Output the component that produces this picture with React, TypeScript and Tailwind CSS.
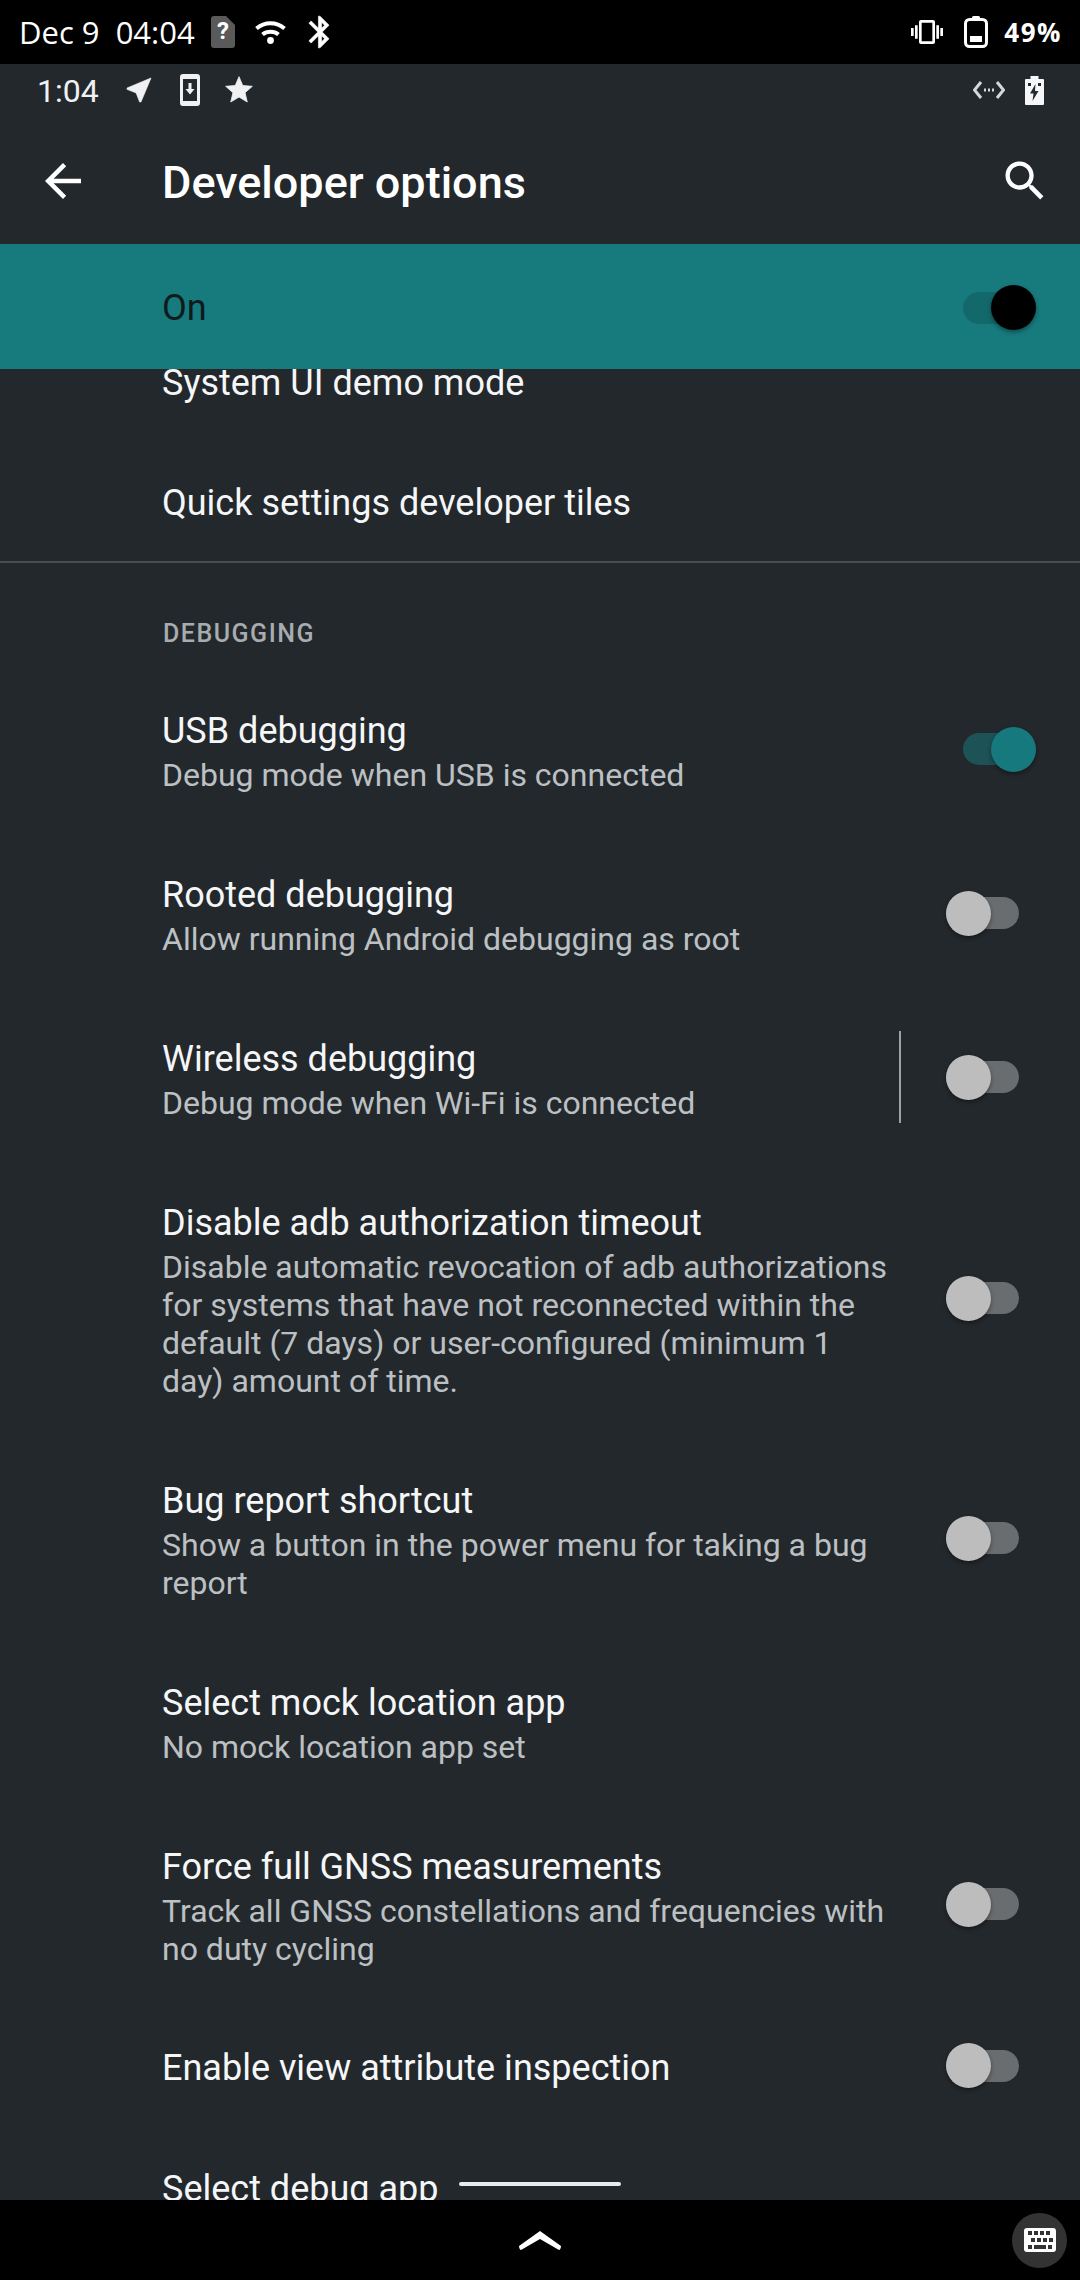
import React from 'react';

const Icon = ({ d, className }: { d: string; className: string }) => (
  <svg viewBox="0 0 24 24" fill="currentColor" className={className}>
    <path d={d} />
  </svg>
);

const Toggle = ({ on = false, nudge = false }: { on?: boolean; nudge?: boolean }) =>
  on ? (
    <div className={`ml-auto mr-[44px] flex h-[32px] w-[73px] shrink-0 items-center justify-end rounded-full bg-[#1d5257] ${nudge ? '-mt-[4px]' : ''}`}>
      <div className="h-[45px] w-[45px] shrink-0 rounded-full bg-[#15797e] shadow-[0_2px_4px_rgba(0,0,0,0.4)]" />
    </div>
  ) : (
    <div className={`ml-auto mr-[61px] flex h-[32px] w-[73px] shrink-0 items-center rounded-full bg-[#6a6d70] ${nudge ? '-mt-[4px]' : ''}`}>
      <div className="h-[45px] w-[45px] shrink-0 rounded-full bg-[#bdbdbd] shadow-[0_2px_4px_rgba(0,0,0,0.4)]" />
    </div>
  );

const Row = ({
  title,
  summary,
  toggle,
  on,
  divider,
  tall,
}: {
  title: string;
  summary?: string;
  toggle?: boolean;
  on?: boolean;
  divider?: boolean;
  tall?: boolean;
}) => (
  <div className={`flex items-center pl-[162px] ${summary ? 'pb-[36px] pt-[42px]' : tall ? 'h-[123px]' : 'h-[120px]'}`}>
    <div className={`${divider ? 'w-[737px]' : 'w-[730px]'} ${summary ? '' : 'pt-[4px]'}`}>
      <div className="text-[36px] leading-[46px] text-[#f5f6f7]">{title}</div>
      {summary && <div className="mt-[2px] text-[32px] leading-[38px] text-[#bcc0c3]">{summary}</div>}
    </div>
    {divider && <div className="-mb-[2px] -mt-[6px] h-[92px] w-[2px] bg-[#9ea2a5]" />}
    {toggle && <Toggle on={on} nudge={!!summary} />}
  </div>
);

export default function App() {
  return (
    <div className="flex h-[2280px] w-[1080px] flex-col overflow-hidden bg-[#23282c] font-['Roboto',sans-serif]">
      {/* device status bar */}
      <div className="flex h-[64px] shrink-0 items-center bg-black pl-[19px] pr-[18px] text-white">
        <span className="whitespace-pre font-['Open_Sans',sans-serif] text-[31px] font-medium">Dec 9  04:04</span>
        <svg viewBox="0 0 24 32" className="ml-[16px] h-[32px] w-[24px]">
          <path d="M3 0h12l9 9v20a3 3 0 0 1-3 3H3a3 3 0 0 1-3-3V3a3 3 0 0 1 3-3z" fill="#5a5a5a" />
          <text x="12" y="23" textAnchor="middle" fontSize="24" fontWeight="700" fill="#fff">?</text>
        </svg>
        <svg viewBox="0 0 31 23" fill="none" stroke="#fff" strokeWidth="4" className="ml-[20px] h-[23px] w-[31px]">
          <path d="M1.500 7.500C9.500 .5 21.500 .5 29.500 7.500" />
          <path d="M7.500 13.500c4.500-3.800 11.500-3.800 16 0" />
          <circle cx="15.500" cy="19.500" r="3.400" fill="#fff" stroke="none" />
        </svg>
        <Icon
          className="ml-[15px] h-[38px] w-[38px] stroke-white stroke-[0.4]"
          d="M17.710 7.710L12 2h-1v7.590L6.410 5 5 6.410 10.590 12 5 17.590 6.410 19 11 14.410V22h1l5.710-5.710-4.300-4.290 4.300-4.290zM13 5.830l1.880 1.880L13 9.590V5.830zm1.880 10.460L13 18.170v-3.760l1.880 1.880z"
        />
        <Icon
          className="ml-auto h-[32px] w-[32px]"
          d="M0 15h2V9H0v6zm3 2h2V7H3v10zm19-8v6h2V9h-2zm-3 8h2V7h-2v10zM16.500 3h-9C6.670 3 6 3.670 6 4.500v15c0 .830.670 1.500 1.500 1.500h9c.830 0 1.500-.670 1.500-1.500v-15c0-.830-.670-1.500-1.500-1.500zM16 19H8V5h8v14z"
        />
        <svg viewBox="0 0 24 32" className="ml-[21px] h-[32px] w-[24px]" fill="none">
          <rect x="8" y="0" width="8" height="4" rx="1.500" fill="#fff" />
          <rect x="1.500" y="3.500" width="21" height="27" rx="4" stroke="#fff" strokeWidth="3" />
          <rect x="6" y="20" width="12" height="6" fill="#fff" />
        </svg>
        <span className="ml-[16px] font-['Open_Sans',sans-serif] text-[26px] font-bold tracking-[1.500px]">49%</span>
      </div>

      {/* android status bar */}
      <div className="flex h-[46px] shrink-0 items-center pl-[37px] pr-[36px] pt-[6px] text-[#f0f1f2]">
        <span className="pt-[2px] text-[32px]">1:04</span>
        <Icon className="ml-[24px] h-[32px] w-[32px] stroke-[#f0f1f2] stroke-[0.5]" d="M21 3L3 10.530v.980l6.840 2.650L12.480 21h.980L21 3z" />
        <svg viewBox="0 0 20 32" className="ml-[25px] h-[32px] w-[20px]">
          <path
            fillRule="evenodd"
            fill="currentColor"
            d="M3 0h14a3 3 0 0 1 3 3v26a3 3 0 0 1-3 3H3a3 3 0 0 1-3-3V3a3 3 0 0 1 3-3zM3 5v22h14V5zM8.500 9h3v6h3l-4.500 5.500L5.500 15h3z"
          />
        </svg>
        <Icon
          className="ml-[23px] h-[32px] w-[32px] stroke-[#f0f1f2] stroke-[0.6]"
          d="M12 17.270L18.180 21l-1.640-7.030L22 9.240l-7.190-.610L12 2 9.190 8.630 2 9.240l5.460 4.730L5.820 21z"
        />
        <svg viewBox="0 0 32 18" fill="none" stroke="#d5d7d9" strokeWidth="3" className="ml-auto h-[18px] w-[32px]">
          <path d="M8 1L1.500 9 8 17M24 1l6.500 8L24 17" />
          <path d="M11 9h2M15 9h2M19 9h2" />
        </svg>
        <svg viewBox="0 0 19 29" className="ml-[20px] h-[29px] w-[19px]">
          <path
            fillRule="evenodd"
            fill="#f5f6f7"
            d="M5.500 0h8v3H18a1 1 0 0 1 1 1v24a1 1 0 0 1-1 1H1a1 1 0 0 1-1-1V4a1 1 0 0 1 1-1h4.500zM3 7v3h3V7zm10 0v3h3V7zM10.500 8L5 17.500h3.500L7.500 25l6-10H10z"
          />
        </svg>
      </div>

      {/* toolbar */}
      <div className="flex h-[134px] shrink-0 items-center pt-[8px] text-white">
        <Icon className="ml-[36px] h-[54px] w-[54px]" d="M20 11H7.830l5.590-5.590L12 4l-8 8 8 8 1.410-1.410L7.830 13H20v-2z" />
        <span className="ml-[72px] pt-[3px] text-[45px] font-medium">Developer options</span>
        <Icon
          className="ml-auto mr-[29px] h-[52px] w-[52px]"
          d="M15.500 14h-.790l-.280-.270C15.410 12.590 16 11.110 16 9.500 16 5.910 13.090 3 9.500 3S3 5.910 3 9.500 5.910 16 9.500 16c1.610 0 3.090-.590 4.230-1.570l.270.280v.790l5 4.990L20.490 19l-4.990-5zm-6 0C7.010 14 5 11.990 5 9.500S7.010 5 9.500 5 14 7.010 14 9.500 11.990 14 9.500 14z"
        />
      </div>

      {/* master switch */}
      <div className="z-10 flex h-[125px] shrink-0 items-center bg-[#177a7d] pl-[162px] pt-[2px]">
        <span className="text-[36px] text-[#0e1a1c]">On</span>
        <div className="ml-auto mr-[44px] flex h-[32px] w-[73px] items-center justify-end rounded-full bg-[#13686b]">
          <div className="h-[45px] w-[45px] shrink-0 rounded-full bg-black shadow-[0_2px_4px_rgba(0,0,0,0.4)]" />
        </div>
      </div>

      {/* scrolled list */}
      <div className="relative min-h-0 flex-1 overflow-hidden">
        <div className="-mt-[48px]">
          <Row title="System UI demo mode" />
          <Row title="Quick settings developer tiles" />
          <div className="h-[2px] bg-[#494d50]" />
          <div className="pb-[18px] pl-[163px] pt-[57px] text-[25px] font-medium leading-[28px] tracking-[1.500px] text-[#a8acaf]">
            DEBUGGING
          </div>
          <Row title="USB debugging" summary="Debug mode when USB is connected" toggle on />
          <Row title="Rooted debugging" summary="Allow running Android debugging as root" toggle />
          <Row title="Wireless debugging" summary="Debug mode when Wi-Fi is connected" toggle divider />
          <Row
            title="Disable adb authorization timeout"
            summary="Disable automatic revocation of adb authorizations for systems that have not reconnected within the default (7 days) or user-configured (minimum 1 day) amount of time."
            toggle
          />
          <Row title="Bug report shortcut" summary="Show a button in the power menu for taking a bug report" toggle />
          <Row title="Select mock location app" summary="No mock location app set" />
          <Row
            title="Force full GNSS measurements"
            summary="Track all GNSS constellations and frequencies with no duty cycling"
            toggle
          />
          <Row title="Enable view attribute inspection" toggle tall />
          <Row title="Select debug app" />
        </div>
        {/* gesture handle sits over the list */}
        <div className="absolute bottom-[14px] left-[459px] h-[4px] w-[162px] rounded-full bg-[#e8eaed]" />
      </div>

      {/* device nav bar */}
      <div className="flex h-[80px] shrink-0 items-center bg-black">
        <svg viewBox="0 0 42 19" className="ml-[519px] h-[19px] w-[42px]" fill="#fff">
          <path d="M21 0L42 15c0 2-1 4-2 4L21 8 2 19c-1 0-2-2-2-4z" />
        </svg>
        <div className="ml-auto mr-[13px] flex h-[55px] w-[55px] items-center justify-center rounded-full bg-[#333]">
          <svg viewBox="0 0 32 24" className="h-[24px] w-[32px]">
            <path
              fillRule="evenodd"
              fill="#fff"
              d="M3 0h26a3 3 0 0 1 3 3v18a3 3 0 0 1-3 3H3a3 3 0 0 1-3-3V3a3 3 0 0 1 3-3zM4 3v4h4V3zm6 0v4h4V3zm6 0v4h4V3zm6 0v4h4V3zM7 10v4h4v-4zm6 0v4h4v-4zm6 0v4h4v-4zm6 0v4h4v-4zM4 17v4h4v-4zm6 0v4h12v-4zm14 0v4h4v-4z"
            />
          </svg>
        </div>
      </div>
    </div>
  );
}
